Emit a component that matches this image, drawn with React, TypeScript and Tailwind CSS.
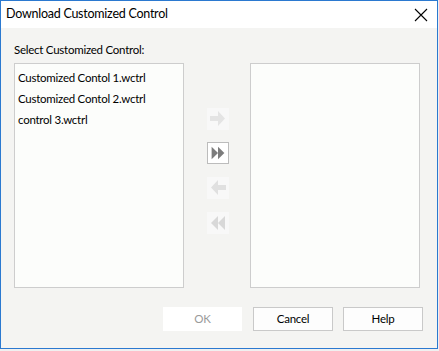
import React from "react";

const items = ["Customized Contol 1.wctrl", "Customized Contol 2.wctrl", "control 3.wctrl"];

function ArrowRight({ color }: { color: string }) {
  return (
    <svg width="22" height="22" viewBox="0 0 22 22">
      <polygon points="3,8 11,8 11,3 18,10.5 11,18 11,13 3,13" fill={color} />
    </svg>
  );
}

function ArrowLeft({ color }: { color: string }) {
  return (
    <svg width="22" height="22" viewBox="0 0 22 22">
      <polygon points="19,8 11,8 11,3 4,10.5 11,18 11,13 19,13" fill={color} />
    </svg>
  );
}

function DoubleRight({ color }: { color: string }) {
  return (
    <svg width="22" height="22" viewBox="0 0 22 22">
      <polygon points="4,4 11,11 4,18" fill={color} />
      <polygon points="11,4 18,11 11,18" fill={color} />
    </svg>
  );
}

function DoubleLeft({ color }: { color: string }) {
  return (
    <svg width="22" height="22" viewBox="0 0 22 22">
      <polygon points="11,4 4,11 11,18" fill={color} />
      <polygon points="18,4 11,11 18,18" fill={color} />
    </svg>
  );
}

export default function App() {
  return (
    <div
      className="w-[439px] h-[351px] bg-[#f0f0f0] text-[11.5px] tracking-[-0.25px] text-black"
      style={{ fontFamily: 'Lato, "Liberation Sans", sans-serif' }}
    >
      <div className="w-[438px] h-[349px] border border-[#2b79d0] flex flex-col bg-[#f4f4f2]">
        {/* Title bar */}
        <div className="h-[27px] bg-white flex items-center justify-between pl-[5px] pr-[8px] shrink-0">
          <span className="text-[12.5px] leading-none">Download Customized Control</span>
          <svg width="14" height="14" viewBox="0 0 14 14" className="mr-[1px]">
            <path d="M1 1 L13 13 M13 1 L1 13" stroke="#000" strokeWidth="1.1" />
          </svg>
        </div>

        {/* Body */}
        <div className="flex-1 flex flex-col px-[13px]">
          <div className="mt-[14px] h-[15px] leading-[15px]">Select Customized Control:</div>

          <div className="mt-[6px] flex">
            <div className="w-[170px] h-[225px] border border-[#cdcdcd] bg-[#fcfdfb] pt-[3px] pl-[3px]">
              {items.map((it) => (
                <div key={it} className="h-[21px] leading-[21px] whitespace-nowrap">
                  {it}
                </div>
              ))}
            </div>

            <div className="w-[66px] flex flex-col items-center pt-[45px] pl-[2px]">
              <button className="w-[22px] h-[22px] bg-[#f8f8f8] flex items-center justify-center">
                <ArrowRight color="#e4e4e4" />
              </button>
              <button className="mt-[12px] w-[22px] h-[22px] bg-white border border-[#bcbcbc] flex items-center justify-center">
                <DoubleRight color="#7c7c7c" />
              </button>
              <button className="mt-[13px] w-[22px] h-[22px] bg-[#f8f8f8] flex items-center justify-center">
                <ArrowLeft color="#e0e0e0" />
              </button>
              <button className="mt-[13px] w-[22px] h-[22px] bg-[#f8f8f8] flex items-center justify-center">
                <DoubleLeft color="#d8d8d8" />
              </button>
            </div>

            <div className="w-[170px] h-[225px] border border-[#cdcdcd] bg-[#fcfdfb]" />
          </div>

          <div className="mt-[19px] flex justify-end pr-[1px]">
            <button className="w-[79px] h-[24px] bg-white text-[#9a9a9a]">OK</button>
            <button className="ml-[11px] w-[80px] h-[24px] bg-[#fdfdfd] border border-[#c9c9c9]">Cancel</button>
            <button className="ml-[10px] w-[80px] h-[24px] bg-[#fdfdfd] border border-[#c9c9c9]">Help</button>
          </div>
        </div>
      </div>
    </div>
  );
}
